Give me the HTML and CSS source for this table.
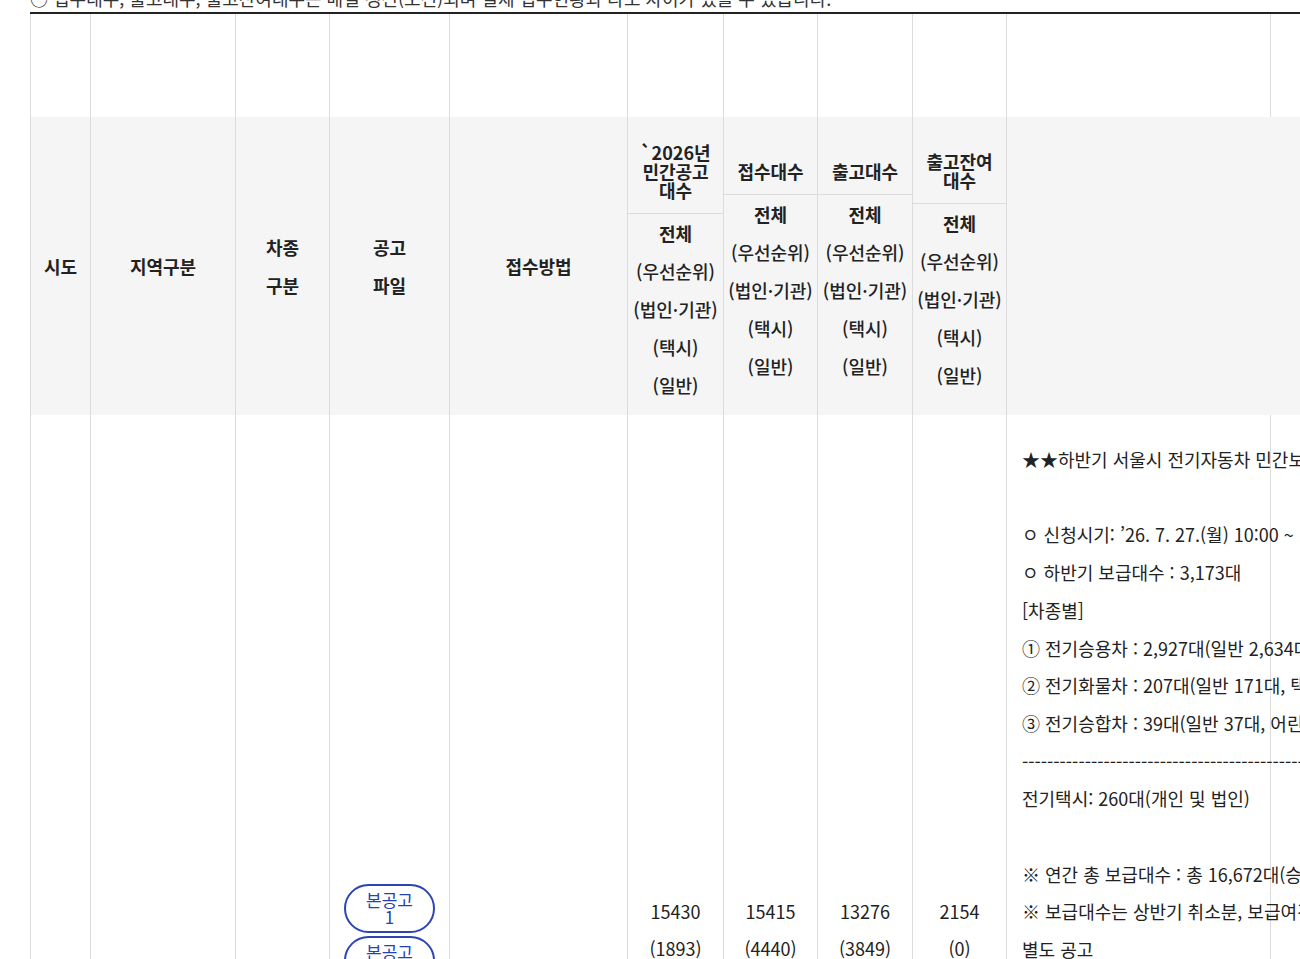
FILE: index.html
```html
<!DOCTYPE html>
<html lang="ko">
<head>
<meta charset="utf-8">
<title>전기자동차 민간공고 현황</title>
<link rel="stylesheet" href="styles.css">
</head>
<body>
<div class="page">
  <p class="notice">○ 접수대수, 출고대수, 출고잔여대수는 매일 갱신(오전)되며 실제 접수현황과 다소 차이가 있을 수 있습니다.</p>
  <table class="grid">
    <colgroup>
      <col class="c1"><col class="c2"><col class="c3"><col class="c4"><col class="c5">
      <col class="c6"><col class="c7"><col class="c8"><col class="c9"><col class="c10"><col class="c11">
    </colgroup>
    <tbody>
      <tr class="blank">
        <td></td><td></td><td></td><td></td><td></td><td></td><td></td><td></td><td></td><td></td><td></td>
      </tr>
      <tr class="head">
        <th>시도</th>
        <th>지역구분</th>
        <th class="two">차종<br>구분</th>
        <th class="two">공고<br>파일</th>
        <th>접수방법</th>
        <th class="stack">
          <div class="hd-title">`2026년<br>민간공고<br>대수</div>
          <div class="hd-sub"><b>전체</b><br>(우선순위)<br>(법인·기관)<br>(택시)<br>(일반)</div>
        </th>
        <th class="stack">
          <div class="hd-title">접수대수</div>
          <div class="hd-sub"><b>전체</b><br>(우선순위)<br>(법인·기관)<br>(택시)<br>(일반)</div>
        </th>
        <th class="stack">
          <div class="hd-title">출고대수</div>
          <div class="hd-sub"><b>전체</b><br>(우선순위)<br>(법인·기관)<br>(택시)<br>(일반)</div>
        </th>
        <th class="stack">
          <div class="hd-title">출고잔여<br>대수</div>
          <div class="hd-sub"><b>전체</b><br>(우선순위)<br>(법인·기관)<br>(택시)<br>(일반)</div>
        </th>
        <th colspan="2"></th>
      </tr>
      <tr class="body">
        <td></td>
        <td></td>
        <td></td>
        <td class="files">
          <div class="btns">
            <a class="pill">본공고<br>1</a>
            <a class="pill">본공고<br>2</a>
          </div>
        </td>
        <td></td>
        <td class="num">15430<br>(1893)</td>
        <td class="num">15415<br>(4440)</td>
        <td class="num">13276<br>(3849)</td>
        <td class="num">2154<br>(0)</td>
        <td class="memo">★★하반기 서울시 전기자동차 민간보급 공고★★<br>
<br>
ㅇ 신청시기: ’26. 7. 27.(월) 10:00 ~ 12. 31.(목) 18:00<br>
ㅇ 하반기 보급대수 : 3,173대<br>
[차종별]<br>
① 전기승용차 : 2,927대(일반 2,634대, 택시 260대, 법인 33대)<br>
② 전기화물차 : 207대(일반 171대, 택배 36대)<br>
③ 전기승합차 : 39대(일반 37대, 어린이 통학 2대)<br>
---------------------------------------------------------------<br>
전기택시: 260대(개인 및 법인)<br>
<br>
※ 연간 총 보급대수 : 총 16,672대(승용 15,430대 포함)<br>
※ 보급대수는 상반기 취소분, 보급여건 등에 따라 변동될 수 있으며<br>
별도 공고</td>
        <td></td>
      </tr>
    </tbody>
  </table>
</div>
</body>
</html>
```
FILE: styles.css
```css
html, body {
  margin: 0;
  padding: 0;
  background: #ffffff;
  overflow: hidden;
}

body {
  font-family: "Noto Sans CJK KR", "Noto Sans", sans-serif;
  color: #222222;
  width: 1300px;
  height: 959px;
}

.page {
  padding-left: 30px;
}

.notice {
  margin: -14px 0 0 0;
  height: 26px;
  font-size: 18px;
  line-height: 24px;
  color: #333333;
  white-space: nowrap;
}

.grid {
  border-collapse: collapse;
  table-layout: fixed;
  width: 1340px;
  border-top: 2px solid #222222;
}

.c1 { width: 60px; }
.c2 { width: 145px; }
.c3 { width: 94px; }
.c4 { width: 120px; }
.c5 { width: 178px; }
.c6 { width: 96px; }
.c7 { width: 94px; }
.c8 { width: 95px; }
.c9 { width: 94px; }
.c10 { width: 264px; }
.c11 { width: 100px; }

.grid td,
.grid th {
  border-left: 1px solid #dcdcdc;
  border-right: 1px solid #dcdcdc;
  padding: 0;
}

.blank td {
  height: 103px;
}

.head th {
  background: #f5f5f5;
  height: 298px;
  font-size: 18px;
  font-weight: 700;
  line-height: 22px;
  text-align: center;
  vertical-align: middle;
}

.head th.two {
  line-height: 38px;
}

.hd-title {
  padding: 14px 0 13px;
  line-height: 19px;
  border-bottom: 1px solid #dcdcdc;
}

.hd-sub {
  font-size: 18px;
  font-weight: 500;
  line-height: 38px;
  white-space: nowrap;
}

.hd-sub b {
  font-weight: 700;
}

.body td {
  height: 1004px;
  vertical-align: middle;
  text-align: center;
}

.num {
  font-size: 18px;
  line-height: 37px;
  color: #222222;
}

.btns {
  display: flex;
  flex-direction: column;
  align-items: center;
  gap: 3px;
  margin-top: 8px;
}

.pill {
  display: flex;
  align-items: center;
  justify-content: center;
  box-sizing: border-box;
  width: 91px;
  height: 49px;
  border: 2px solid #2d45b4;
  border-radius: 25px;
  color: #2442b6;
  font-size: 17px;
  line-height: 17px;
  text-align: center;
  text-decoration: none;
  background: #ffffff;
}

.grid td.memo {
  vertical-align: top;
  text-align: left;
  padding: 26px 0 0 15px;
  font-size: 18px;
  line-height: 37.7px;
  white-space: nowrap;
  color: #222222;
}
```
